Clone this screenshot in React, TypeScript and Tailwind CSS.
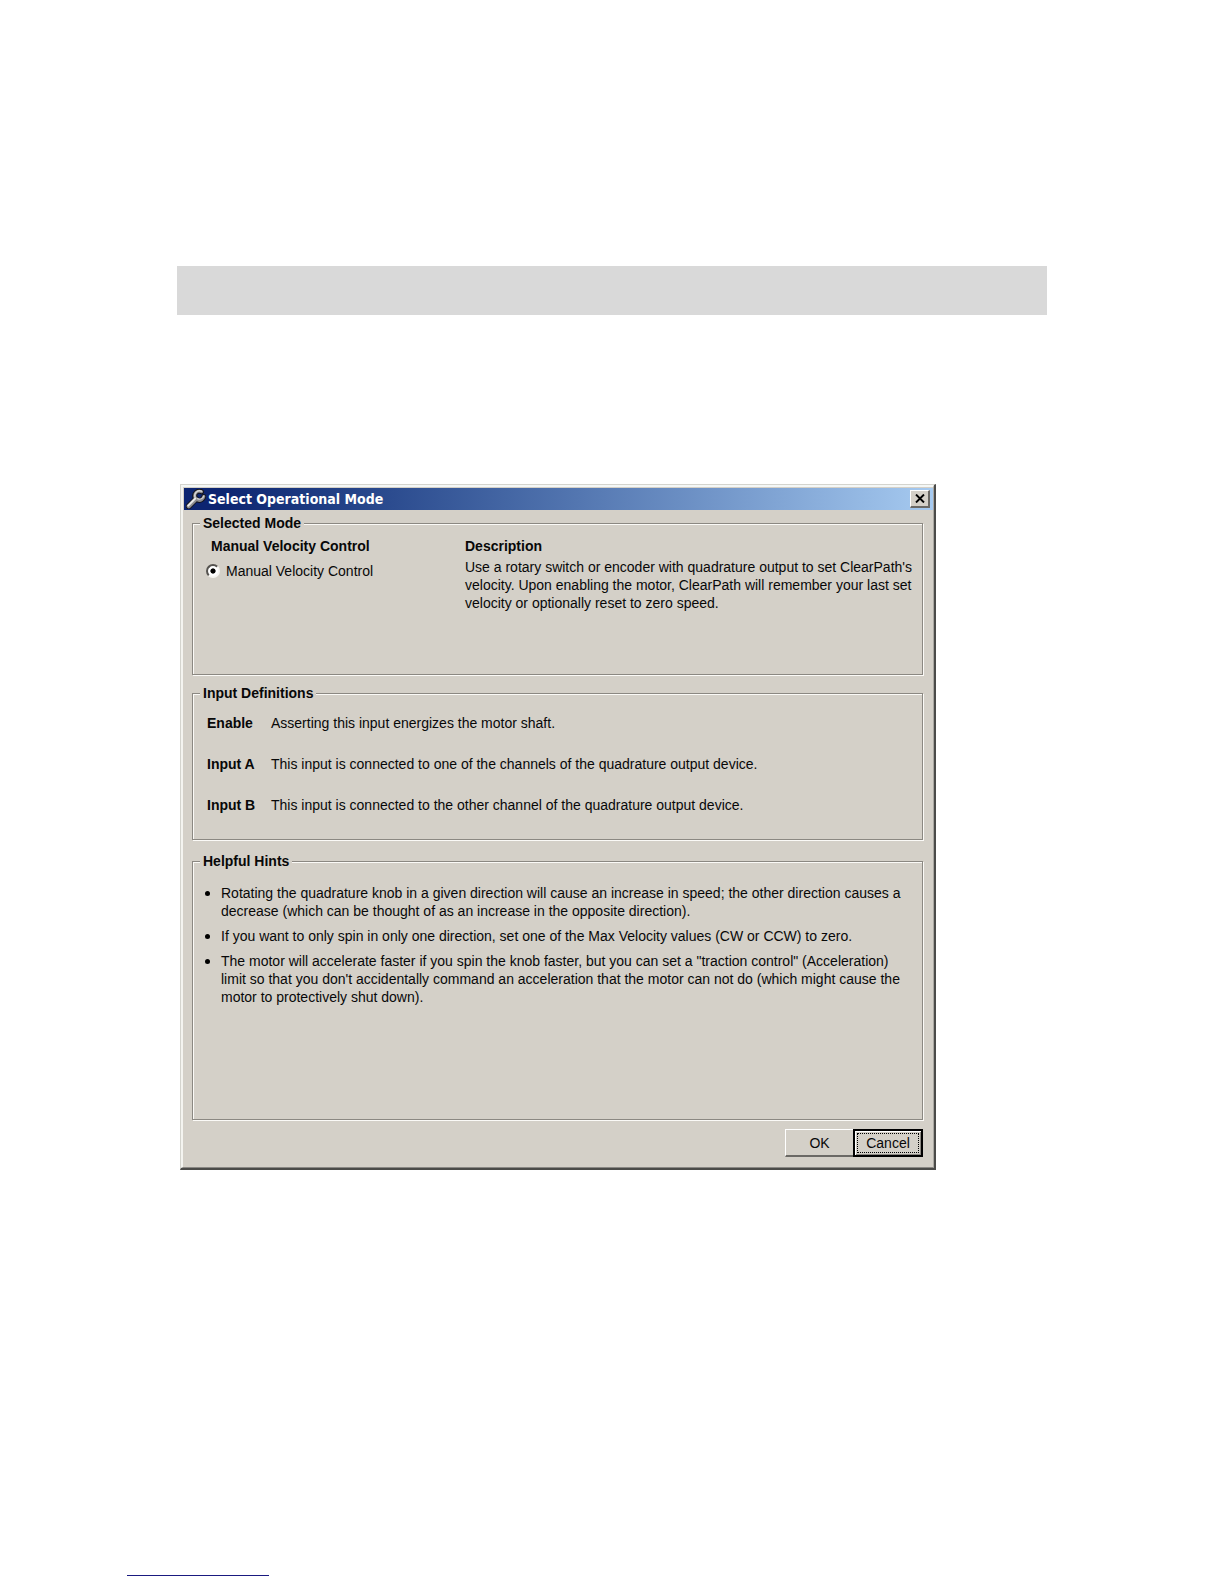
import type { ReactNode } from "react";

const inputs = [
  { name: "Enable", text: "Asserting this input energizes the motor shaft." },
  { name: "Input A", text: "This input is connected to one of the channels of the quadrature output device." },
  { name: "Input B", text: "This input is connected to the other channel of the quadrature output device." },
];

const hints = [
  ["Rotating the quadrature knob in a given direction will cause an increase in speed; the other direction causes a", "decrease (which can be thought of as an increase in the opposite direction)."],
  ["If you want to only spin in only one direction, set one of the Max Velocity values (CW or CCW) to zero."],
  ["The motor will accelerate faster if you spin the knob faster, but you can set a \"traction control\" (Acceleration)", "limit so that you don't accidentally command an acceleration that the motor can not do (which might cause the", "motor to protectively shut down)."],
];

const description = [
  "Use a rotary switch or encoder with quadrature output to set ClearPath's",
  "velocity. Upon enabling the motor, ClearPath will remember your last set",
  "velocity or optionally reset to zero speed.",
];

function Lines({ lines }: { lines: string[] }) {
  return (
    <>
      {lines.map((line) => (
        <span key={line} className="block">{line}</span>
      ))}
    </>
  );
}

function Group({ title, className, children }: { title: string; className: string; children: ReactNode }) {
  return (
    <fieldset className={`border border-[#8b8882] shadow-[1px_1px_0_#fbfaf7,inset_1px_1px_0_#fbfaf7] ${className}`}>
      <legend className="ml-[7px] bg-[#d4d0c8] px-[3px] font-bold">{title}</legend>
      {children}
    </fieldset>
  );
}

function WrenchIcon() {
  return (
    <svg viewBox="0 0 20 20" className="size-5 shrink-0" fill="none" strokeLinecap="round" aria-hidden="true">
      <path d="M2.8 17.2 L10 10" stroke="#15151c" strokeWidth="6" />
      <path d="M15.6 2.8 A4.6 4.6 0 1 0 17.8 7.6" stroke="#15151c" strokeWidth="5" />
      <path d="M2.8 17.2 L10 10" stroke="#8f8f92" strokeWidth="4.2" />
      <path d="M15.6 2.8 A4.6 4.6 0 1 0 17.8 7.6" stroke="#8b8b8f" strokeWidth="3" />
      <path d="M2.2 16.6 L9.4 9.4" stroke="#ebebe9" strokeWidth="2" />
      <path d="M15.6 2.2 A4.8 4.8 0 0 0 9 8" stroke="#d8d8d8" strokeWidth="1.4" />
      <path d="M11.6 9.6 A4.4 4.4 0 0 0 17.8 7" stroke="#cfcfcf" strokeWidth="1.3" />
    </svg>
  );
}

function TitleBar() {
  return (
    <header className="flex h-[22px] items-center bg-linear-to-r from-[#0d2571] from-5% to-[#a6caf0] pr-[3px] pl-[2px]">
      <WrenchIcon />
      <h1 className="ml-[2px] grow font-['DejaVu_Sans_Condensed','DejaVu_Sans',sans-serif] text-[14px] font-bold text-white">Select Operational Mode</h1>
      <button type="button" aria-label="Close" className="flex h-[18px] w-5 items-center justify-center border-t border-r-2 border-b-2 border-l border-t-white border-r-[#6b6965] border-b-[#6b6965] border-l-white bg-[#d4d0c8]">
        <svg viewBox="0 0 10 9" className="h-[9px] w-[10px]" aria-hidden="true">
          <path d="M1 .5 L9 8.5 M9 .5 L1 8.5" stroke="#000" strokeWidth="1.9" />
        </svg>
      </button>
    </header>
  );
}

export default function App() {
  return (
    <div className="flex min-h-screen flex-col bg-white font-['Liberation_Sans',Arial,sans-serif] text-[14px] leading-[18px] text-[#080808]">
      <main className="px-[177px] pt-[266px]">
        <div className="h-[49px] bg-[#d9d9d9]" />
        <section aria-label="Select Operational Mode" className="mt-[169px] ml-[3px] max-w-[756px] border-t border-r-2 border-b-2 border-l border-t-[#d4d4ce] border-r-[#4b4b49] border-b-[#4b4b49] border-l-[#d4d4ce] bg-[#d4d0c8]">
          <div className="border-t-2 border-r border-b border-l-2 border-t-[#f4f7f6] border-r-[#aaa8a2] border-b-[#8a8884] border-l-[#f4f4f0] pt-px pl-px">
            <TitleBar />
            <div className="pt-1 pr-[10px] pb-[10px] pl-2">
              <Group title="Selected Mode" className="min-h-[161px]">
                <div className="flex pt-[5px]">
                  <div className="w-[272px] shrink-0 pl-[13px]">
                    <h2 className="pl-[5px] font-bold">Manual Velocity Control</h2>
                    <label className="mt-[7px] flex items-center">
                      <input type="radio" name="mode" defaultChecked className="mr-[6px] size-[14px] appearance-none rounded-full border-2 border-t-[#55534f] border-r-[#f6f5f2] border-b-[#f6f5f2] border-l-[#55534f] bg-white bg-radial from-black from-[2px] to-white to-[3px]" />
                      Manual Velocity Control
                    </label>
                  </div>
                  <div>
                    <h2 className="font-bold">Description</h2>
                    <p className="mt-[3px]"><Lines lines={description} /></p>
                  </div>
                </div>
              </Group>
              <Group title="Input Definitions" className="mt-[9px] min-h-[156px]">
                <dl className="flex flex-col gap-[23px] pt-3 pl-[14px]">
                  {inputs.map((row) => (
                    <div key={row.name} className="flex">
                      <dt className="w-16 shrink-0 font-bold">{row.name}</dt>
                      <dd>{row.text}</dd>
                    </div>
                  ))}
                </dl>
              </Group>
              <Group title="Helpful Hints" className="mt-3 min-h-[268px]">
                <ul className="flex flex-col gap-[7px] pt-[14px] pl-3">
                  {hints.map((lines) => (
                    <li key={lines[0]} className="flex">
                      <span className="mt-[7px] mr-[11px] size-[5px] shrink-0 rounded-full bg-black" />
                      <p><Lines lines={lines} /></p>
                    </li>
                  ))}
                </ul>
              </Group>
              <div className="mt-[9px] flex justify-end">
                <button type="button" className="h-7 w-[68px] border-t border-b-2 border-l border-t-white border-b-[#6b6965] border-l-white">OK</button>
                <button type="button" className="h-7 w-[70px] border-2 border-black p-[2px] shadow-[inset_1px_1px_0_#fff,inset_-1px_-1px_0_#8b8882]">
                  <span className="flex h-full items-center justify-center border border-dotted border-black">Cancel</span>
                </button>
              </div>
            </div>
          </div>
        </section>
      </main>
      <footer className="mt-auto px-[127px] pb-2">
        <div className="h-px w-[142px] bg-[#1a1a80]" />
      </footer>
    </div>
  );
}
